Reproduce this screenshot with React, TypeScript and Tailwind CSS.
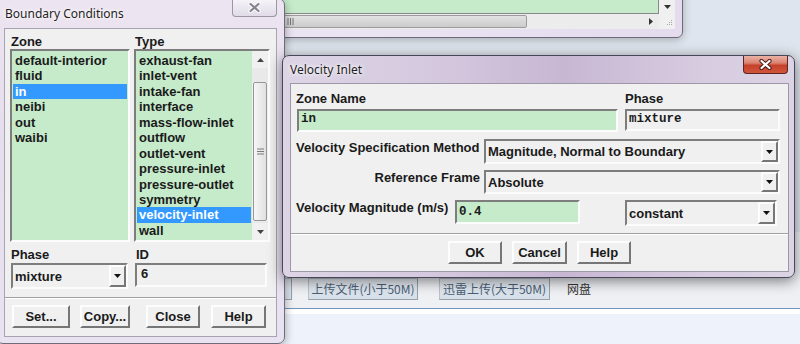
import React from 'react'

const ui = "font-['Liberation_Sans',Arial,sans-serif] font-bold text-[13px] leading-[15px] text-[#1a1a1a] whitespace-nowrap"
const mono = "font-['Liberation_Mono','Courier_New',monospace] font-bold text-[12.5px] text-[#1a1a1a]"
const sunken = 'border-2 border-t-[#7d7d7d] border-l-[#7d7d7d] border-b-[#fcfcfc] border-r-[#fcfcfc]'
const raised = 'border-2 border-t-[#fdfdfd] border-l-[#fdfdfd] border-b-[#767676] border-r-[#767676]'
const title = "font-['Noto_Sans','Open_Sans',sans-serif] text-[12px] text-[#1e1e1e] [text-shadow:0_0_6px_#fff,0_0_3px_#fff]"

const zones = ['default-interior', 'fluid', 'in', 'neibi', 'out', 'waibi']
const types = [
  'exhaust-fan', 'inlet-vent', 'intake-fan', 'interface', 'mass-flow-inlet', 'outflow',
  'outlet-vent', 'pressure-inlet', 'pressure-outlet', 'symmetry', 'velocity-inlet', 'wall',
]

function Tri({ dir = 'down', color = '#111' }: { dir?: 'down' | 'up' | 'right'; color?: string }) {
  if (dir === 'right') {
    return (
      <svg width="4" height="7" viewBox="0 0 4 7">
        <path d="M0 0L4 3.5L0 7z" fill={color} />
      </svg>
    )
  }
  return (
    <svg width="7" height="4" viewBox="0 0 7 4">
      <path d={dir === 'up' ? 'M0 4h7L3.5 0z' : 'M0 0h7L3.5 4z'} fill={color} />
    </svg>
  )
}

function CloseX({ active }: { active?: boolean }) {
  const d = 'M2.5 2L10.5 9M10.5 2L2.5 9'
  return (
    <svg width="13" height="11" viewBox="0 0 13 11">
      <path d={d} stroke={active ? '#4a1c16' : '#fbfbfc'} strokeWidth="4.2" strokeLinecap="round" />
      <path d={d} stroke={active ? '#ffffff' : '#858590'} strokeWidth="2.2" strokeLinecap="round" />
    </svg>
  )
}

function Btn({ children, className }: { children: React.ReactNode; className: string }) {
  return (
    <div className={`${raised} bg-[#f0f0f0] h-[23px] flex items-center justify-center ${ui} ${className}`}>
      {children}
    </div>
  )
}

function Dropdown({ value, className }: { value: string; className: string }) {
  return (
    <div className={`${sunken} bg-[#f0f0f0] flex ${className}`}>
      <div className={`flex-1 flex items-center pl-[2px] ${ui}`}>{value}</div>
      <div className={`${raised} w-[17px] bg-[#f0f0f0] flex items-center justify-center`}>
        <Tri />
      </div>
    </div>
  )
}

function ListItems({ items, selected }: { items: string[]; selected: string }) {
  return (
    <div className={`flex-1 pt-[2px] px-[1px] overflow-hidden ${ui}`}>
      {items.map((t) => (
        <div
          key={t}
          className={`h-[15.45px] leading-[15.45px] pl-[2px] ${t === selected ? 'bg-[#3399ff] text-white' : ''}`}
        >
          {t}
        </div>
      ))}
    </div>
  )
}

function Separator() {
  return <div className="h-[2px] border-t border-b border-t-[#a0a0a0] border-b-white" />
}

function BackWindow() {
  return (
    <div className="absolute left-0 top-[-10px] w-[683px] h-[48px] rounded-b-[6px] border border-[#6c6a7a] bg-[linear-gradient(90deg,#e6def0,#ebe4f2_50%,#e4dcee)] pl-[7px] pr-[7px] pb-[8px] flex flex-col shadow-[0_2px_8px_rgba(0,0,0,0.25)]">
      <div className="flex h-[23px]">
        <div className="flex-1 bg-[#c6ebcb] border-b border-r border-[#8a8a8a]" />
        <div className="w-[16px] bg-[#f0f0f0] flex items-end justify-center pb-[5px]">
          <Tri color="#333" />
        </div>
      </div>
      <div className="flex h-[15px]">
        <div className="flex-1 bg-[#ececec] flex items-center pl-[47px] pr-[6px]">
          <div className="w-[472px] h-[13px] rounded-[2px] border border-[#9c9c9c] bg-[linear-gradient(180deg,#e2e2e2,#cbcbcb)] flex items-center justify-center">
            <svg width="8" height="7" viewBox="0 0 8 7">
              <path d="M1 0v7M3.5 0v7M6 0v7" stroke="#777" strokeWidth="1" />
            </svg>
          </div>
          <div className="flex-1" />
          <Tri dir="right" color="#333" />
        </div>
        <div className="w-[16px] bg-[#f0f0f0] flex items-end justify-end p-[2px]">
          <svg width="8" height="8" viewBox="0 0 8 8">
            <path d="M6 1h1v1H6zM4 3h1v1H4zM6 3h1v1H6zM2 5h1v1H2zM4 5h1v1H4zM6 5h1v1H6z" fill="#a8a8a8" />
          </svg>
        </div>
      </div>
    </div>
  )
}

function WebPage() {
  const webBtn =
    "h-[22px] flex items-center justify-center border border-[#b8c3ce] border-b-[#95a2ae] border-r-[#95a2ae] bg-[linear-gradient(180deg,#e8eef4,#d6dfe8)] font-['Noto_Sans_CJK_SC',sans-serif] text-[12px] text-[#4a5f78]"
  return (
    <div className="absolute left-0 top-[232px] w-[800px] h-[112px] bg-[#eef0f4] flex flex-col">
      <div className="h-[46px]" />
      <div className="flex items-center h-[22px]">
        <div className={`${webBtn} ml-[240px] w-[52px]`} />
        <div className={`${webBtn} ml-[16px] w-[110px]`}>上传文件(小于50M)</div>
        <div className={`${webBtn} ml-[21px] w-[111px]`}>迅雷上传(大于50M)</div>
        <div className="ml-[17px] font-['Noto_Sans_CJK_SC',sans-serif] text-[12px] text-[#333]">网盘</div>
      </div>
      <div className="mt-[8px] h-[1px] bg-[#6f95ba]" />
      <div className="h-[5px] bg-white" />
      <div className="flex-1 bg-[#eef3fb]" />
    </div>
  )
}

function TypeScroll() {
  return (
    <div className="w-[16px] flex flex-col bg-[#f0f0f0]">
      <div className="h-[17px] flex items-center justify-center">
        <Tri dir="up" color="#444" />
      </div>
      <div className="h-[14px] bg-[#e9e9e9]" />
      <div className="h-[139px] mx-[1px] rounded-[2px] border border-[#979797] bg-[linear-gradient(90deg,#f6f6f6,#e0e0e0)] flex items-center justify-center">
        <svg width="7" height="7" viewBox="0 0 7 7">
          <path d="M0 1h7M0 3.5h7M0 6h7" stroke="#7a7a7a" strokeWidth="1" />
        </svg>
      </div>
      <div className="flex-1 bg-[#e9e9e9]" />
      <div className="h-[17px] flex items-center justify-center">
        <Tri color="#444" />
      </div>
    </div>
  )
}

function BoundaryConditions() {
  return (
    <div className="absolute left-[-4px] top-[-2px] w-[289px] h-[346px] rounded-[7px] border border-[#6d6b7c] bg-[linear-gradient(180deg,#ece4f0,#e6deee_40%,#e9e2f0)] pl-[7px] pr-[7px] pb-[6px] flex flex-col shadow-[0_2px_10px_rgba(0,0,0,0.35)]">
      <div className="h-[29px] flex items-center pl-[1px]">
        <span className={title}>Boundary Conditions</span>
      </div>
      <div className="absolute top-0 right-[7px] w-[45px] h-[18px] rounded-b-[4px] border border-t-0 border-[#9b97a6] bg-[linear-gradient(180deg,#f7f4f9,#e0dbe7)] flex items-center justify-center">
        <CloseX />
      </div>
      <div className="flex-1 flex flex-col border border-[#a7a3b0] bg-[#f0f0f0]">
        <div className="pl-[5px] pr-[6px] pt-[5px]">
          <div className="grid grid-cols-[120px_136px] gap-x-[4px]">
            <div className={`${ui} pl-[1px]`}>Zone</div>
            <div className={`${ui} pl-[1px]`}>Type</div>
            <div className={`${sunken} h-[193px] bg-[#c6ebcb] flex`}>
              <ListItems items={zones} selected="in" />
            </div>
            <div className={`${sunken} h-[193px] bg-[#c6ebcb] flex`}>
              <ListItems items={types} selected="velocity-inlet" />
              <TypeScroll />
            </div>
            <div className={`${ui} pl-[1px] mt-[5px]`}>Phase</div>
            <div className={`${ui} pl-[2px] mt-[5px]`}>ID</div>
            <Dropdown value="mixture" className="ml-[1px] mt-[1px] w-[117px] h-[26px]" />
            <div className={`${sunken} ml-[1px] mt-[1px] w-[132px] h-[24px] bg-[#f0f0f0] pl-[4px] pt-[1px] ${ui}`}>6</div>
          </div>
        </div>
        <div className="mt-[8px]">
          <Separator />
        </div>
        <div className="flex mt-[6px]">
          <Btn className="ml-[7px] w-[58px]">Set...</Btn>
          <Btn className="ml-[10px] w-[50px]">Copy...</Btn>
          <Btn className="ml-[16px] w-[54px]">Close</Btn>
          <Btn className="ml-[11px] w-[55px]">Help</Btn>
        </div>
      </div>
    </div>
  )
}

function VelocityInlet() {
  return (
    <div className="absolute left-[282px] top-[55px] w-[513px] h-[223px] rounded-[7px] border border-[#48465a] bg-[linear-gradient(90deg,#ddd5e6_0%,#d4c8de_30%,#c8b7d3_55%,#d6cadf_80%,#dcd4e5_100%)] pl-[7px] pr-[5px] pb-[5px] flex flex-col shadow-[0_3px_14px_rgba(0,0,0,0.5)]">
      <div className="h-[27px] flex items-center">
        <span className={title}>Velocity Inlet</span>
      </div>
      <div className="absolute top-0 right-[6px] w-[45px] h-[18px] rounded-b-[4px] border border-t-0 border-[#5a2620] bg-[linear-gradient(180deg,#ebb2a4_0%,#da8070_42%,#c6402a_55%,#d0563c_100%)] flex items-center justify-center">
        <CloseX active />
      </div>
      <div className="flex-1 border border-[#9d97a8] bg-[#f0f0f0] flex flex-col pt-[7px]">
        <div className="flex pl-[6px]">
          <div className="w-[321px] flex flex-col">
            <div className={`${ui} -ml-[1px]`}>Zone Name</div>
            <div className={`${sunken} mt-[3px] h-[23px] bg-[#c6ebcb] pl-[2px] leading-[16px] ${mono}`}>in</div>
          </div>
          <div className="ml-[7px] w-[155px] flex flex-col">
            <div className={ui}>Phase</div>
            <div className={`${sunken} mt-[3px] h-[22px] bg-[#f0f0f0] pl-[2px] leading-[16px] ${mono}`}>mixture</div>
          </div>
        </div>
        <div className="flex mt-[7px] pl-[5px]">
          <div className={`${ui} w-[188px] pt-[1px]`}>Velocity Specification Method</div>
          <Dropdown value="Magnitude, Normal to Boundary" className="w-[296px] h-[25px]" />
        </div>
        <div className="flex mt-[6px] pl-[5px]">
          <div className={`${ui} w-[188px] pr-[4px] text-right`}>Reference Frame</div>
          <Dropdown value="Absolute" className="w-[296px] h-[24px]" />
        </div>
        <div className="flex mt-[6px] pl-[5px] items-start">
          <div className={`${ui} w-[159px]`}>Velocity Magnitude (m/s)</div>
          <div className={`${sunken} w-[125px] h-[24px] bg-[#c6ebcb] pl-[2px] flex items-center ${mono}`}>0.4</div>
          <Dropdown value="constant" className="ml-[45px] w-[152px] h-[26px]" />
        </div>
        <div className="mt-[7px]">
          <Separator />
        </div>
        <div className="flex justify-center gap-[10px] mt-[6px]">
          <Btn className="w-[54px]">OK</Btn>
          <Btn className="w-[55px]">Cancel</Btn>
          <Btn className="w-[54px]">Help</Btn>
        </div>
      </div>
    </div>
  )
}

export default function App() {
  return (
    <div className="relative w-[800px] h-[344px] overflow-hidden bg-[#dfe5ee]">
      <WebPage />
      <BackWindow />
      <BoundaryConditions />
      <VelocityInlet />
    </div>
  )
}
